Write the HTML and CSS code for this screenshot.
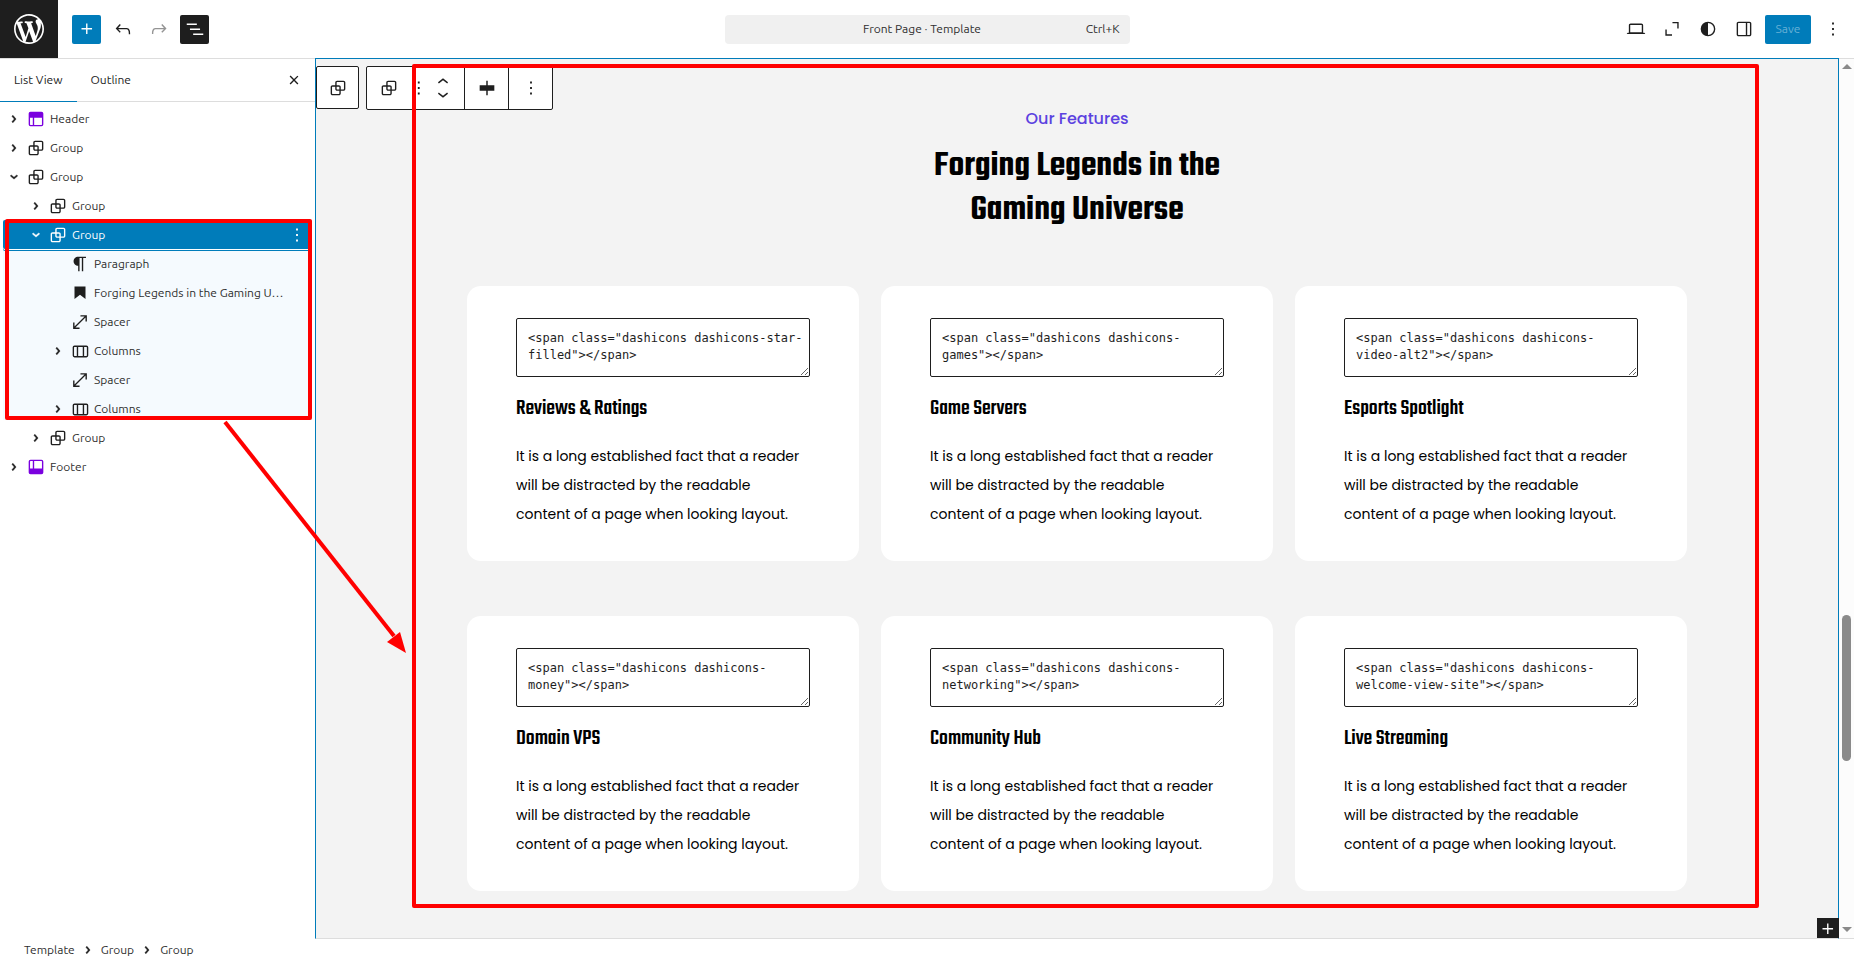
FILE: index.html
```html
<!DOCTYPE html>
<html lang="en">
<head>
<meta charset="utf-8">
<meta name="viewport" content="width=device-width, initial-scale=1">
<title>Front Page · Template</title>
<link rel="stylesheet" href="styles.css">
</head>
<body>
<svg class="sprite" aria-hidden="true">
  <symbol id="i-wp" viewBox="-2 -2 24 24"><path d="M20 10c0-5.51-4.49-10-10-10C4.48 0 0 4.49 0 10c0 5.52 4.48 10 10 10 5.51 0 10-4.48 10-10zM7.78 15.37L4.37 6.22c.55-.02 1.17-.08 1.17-.08.5-.06.44-1.13-.06-1.11 0 0-1.45.11-2.37.11-.18 0-.37 0-.58-.01C4.12 2.69 6.87 1.11 10 1.11c2.33 0 4.45.87 6.05 2.34-.68-.11-1.65.39-1.65 1.58 0 .74.45 1.36.9 2.1.35.61.55 1.36.55 2.46 0 1.49-1.4 5-1.4 5l-3.03-8.37c.54-.02.82-.17.82-.17.5-.05.44-1.25-.06-1.22 0 0-1.44.12-2.38.12-.87 0-2.33-.12-2.33-.12-.5-.03-.56 1.2-.06 1.22l.92.08 1.26 3.41zM17.41 10c.24-.64.74-1.87.43-4.25.7 1.29 1.05 2.71 1.05 4.25 0 3.29-1.73 6.24-4.4 7.78.97-2.59 1.94-5.2 2.92-7.78zM6.1 18.09C3.12 16.65 1.11 13.53 1.11 10c0-1.3.23-2.48.72-3.59C3.25 10.3 4.67 14.2 6.1 18.09zm4.03-6.63l2.58 6.98c-.86.29-1.76.45-2.71.45-.79 0-1.57-.11-2.29-.33.81-2.38 1.62-4.74 2.42-7.1z"/></symbol>
  <symbol id="i-plus" viewBox="0 0 24 24"><path d="M11 12.5V17.5H12.5V12.5H17.5V11H12.5V6H11V11H6V12.5H11Z"/></symbol>
  <symbol id="i-undo" viewBox="0 0 24 24"><path d="M18.3 11.7c-.6-.6-1.4-.9-2.3-.9H6.7l2.9-3.3-1.1-1-4.5 5L8.5 16l1-1-2.7-2.7H16c.5 0 .9.2 1.3.5 1 1 1 3.4 1 4.5v.3h1.5v-.2c0-1.5 0-4.3-1.5-5.7z"/></symbol>
  <symbol id="i-redo" viewBox="0 0 24 24"><path d="M15.6 6.5l-1.1 1 2.9 3.3H8c-.9 0-1.7.3-2.3.9-1.4 1.5-1.4 4.2-1.4 5.6v.2h1.5v-.3c0-1.1 0-3.5 1-4.5.3-.3.7-.5 1.3-.5h9.2L14.5 15l1.1 1.1 4.6-4.6-4.6-5z"/></symbol>
  <symbol id="i-list" viewBox="0 0 24 24"><path d="M3 6h11v1.5H3V6Zm3.5 5.5h11V13h-11v-1.5ZM21 17H10v1.5h11V17Z"/></symbol>
  <symbol id="i-close" viewBox="0 0 24 24"><path d="M12 13.06l3.712 3.713 1.061-1.06L13.061 12l3.712-3.712-1.06-1.06L12 10.938 8.288 7.227l-1.061 1.06L10.939 12l-3.712 3.712 1.06 1.061L12 13.061z"/></symbol>
  <symbol id="i-right" viewBox="0 0 24 24"><path d="M10.86 8.04L14.28 12.03L10.86 16.02L9.72 15.04L12.3 12.03L9.72 9.02L10.86 8.04Z" stroke="currentColor" stroke-width=".5"/></symbol>
  <symbol id="i-down" viewBox="0 0 24 24"><path d="M15.99 10.89L12 14.31L8.01 10.89L8.99 9.75L12 12.33L15.01 9.75L15.99 10.89Z" stroke="currentColor" stroke-width=".5"/></symbol>
  <symbol id="i-header" viewBox="0 0 24 24"><path fill-rule="evenodd" d="M18.5 10.5H10v8h8a.5.5 0 00.5-.5v-7.5zm-10 0h-3V18a.5.5 0 00.5.5h2.5v-8zM6 4h12a2 2 0 012 2v12a2 2 0 01-2 2H6a2 2 0 01-2-2V6a2 2 0 012-2z"/></symbol>
  <symbol id="i-footer" viewBox="0 0 24 24"><path fill-rule="evenodd" d="M18 5.5h-8v8h8.5V6a.5.5 0 00-.5-.5zm-9.5 8h-3V6a.5.5 0 01.5-.5h2.5v8zM6 4h12a2 2 0 012 2v12a2 2 0 01-2 2H6a2 2 0 01-2-2V6a2 2 0 012-2z"/></symbol>
  <symbol id="i-group" viewBox="0 0 24 24"><path d="M18 4h-7c-1.1 0-2 .9-2 2v3H6c-1.1 0-2 .9-2 2v7c0 1.1.9 2 2 2h7c1.1 0 2-.9 2-2v-3h3c1.1 0 2-.9 2-2V6c0-1.1-.9-2-2-2zm-4.5 14c0 .3-.2.5-.5.5H6c-.3 0-.5-.2-.5-.5v-7c0-.3.2-.5.5-.5h3V13c0 1.1.9 2 2 2h2.5v3zm0-4.5H11c-.3 0-.5-.2-.5-.5v-2.5H13c.3 0 .5.2.5.5v2.5zm5-.5c0 .3-.2.5-.5.5h-3V11c0-1.1-.9-2-2-2h-2.5V6c0-.3.2-.5.5-.5h7c.3 0 .5.2.5.5v7z"/></symbol>
  <symbol id="i-paragraph" viewBox="0 0 24 24"><path d="m9.996 14v-.225l.004 0v6.225h1.5v-14.5h2.5v14.5h1.5v-14.5h3v-1.5h-8.504c-2.761 0-5 2.239-5 5 0 2.761 2.239 5 5 5z"/></symbol>
  <symbol id="i-heading" viewBox="0 0 24 24"><path d="M6 5V18.59L12 13.85L18 18.59V5H6Z"/></symbol>
  <symbol id="i-spacer" viewBox="0 0 24 24"><path d="M7 18h4.5v1.5h-7v-7H6V17L17 6h-4.5V4.5h7v7H18V7L7 18Z"/></symbol>
  <symbol id="i-columns" viewBox="0 0 24 24"><path fill-rule="evenodd" d="M15 7.5h-5v10h5v-10Zm1.5 0v10H19a.5.5 0 0 0 .5-.5V8a.5.5 0 0 0-.5-.5h-2.5ZM6 7.5h2.5v10H6a.5.5 0 0 1-.5-.5V8a.5.5 0 0 1 .5-.5ZM6 6h13a2 2 0 0 1 2 2v9a2 2 0 0 1-2 2H6a2 2 0 0 1-2-2V8a2 2 0 0 1 2-2Z"/></symbol>
  <symbol id="i-more" viewBox="0 0 24 24"><path d="M13 19h-2v-2h2v2zm0-6h-2v-2h2v2zm0-6h-2V5h2v2z"/></symbol>
  <symbol id="i-laptop" viewBox="0 0 24 24"><path d="M20.5 16h-.7V8c0-1.1-.9-2-2-2H6.2c-1.1 0-2 .9-2 2v8h-.7c-.8 0-1.5.7-1.5 1.5h20c0-.8-.7-1.5-1.5-1.5zM5.7 8c0-.3.2-.5.5-.5h11.6c.3 0 .5.2.5.5v7.6H5.7V8z"/></symbol>
  <symbol id="i-expand" viewBox="0 0 24 24"><path d="M12.5 5H18.5V11.5M5.5 12.5V18.5H12" fill="none" stroke="currentColor" stroke-width="1.5"/></symbol>
  <symbol id="i-styles" viewBox="0 0 24 24"><path fill-rule="evenodd" d="M20 12a8 8 0 1 1-16 0 8 8 0 0 1 16 0Zm-1.5 0a6.5 6.5 0 0 1-6.5 6.5v-13a6.5 6.5 0 0 1 6.5 6.5Z"/></symbol>
  <symbol id="i-drawer" viewBox="0 0 24 24"><path fill-rule="evenodd" d="M18 4H6c-1.1 0-2 .9-2 2v12c0 1.1.9 2 2 2h12c1.1 0 2-.9 2-2V6c0-1.1-.9-2-2-2zm-4 14.5H6c-.3 0-.5-.2-.5-.5V6c0-.3.2-.5.5-.5h8v13zm4.5-.5c0 .3-.2.5-.5.5h-2.5v-13H18c.3 0 .5.2.5.5v12z"/></symbol>
  <symbol id="i-drag" viewBox="0 0 24 24"><path d="M8 7h2V5H8v2zm0 6h2v-2H8v2zm0 6h2v-2H8v2zm6-14v2h2V5h-2zm0 8h2v-2h-2v2zm0 6h2v-2h-2v2z"/></symbol>
  <symbol id="i-up-wide" viewBox="0 0 24 24"><path d="M6.5 12.4L12 8l5.5 4.4-.9 1.2L12 10l-4.5 3.6-1-1.2z"/></symbol>
  <symbol id="i-down-wide" viewBox="0 0 24 24"><path d="M17.5 11.6L12 16l-5.5-4.4.9-1.2L12 14l4.5-3.6 1 1.2z"/></symbol>
  <symbol id="i-align" viewBox="0 0 24 24"><path d="M4 9h7.2V4h1.6v5H20v6h-7.2v5h-1.6v-5H4z"/></symbol>
</svg>

<header class="topbar">
  <a class="logo" href="#" aria-label="Open navigation"><svg class="logo-mark"><use href="#i-wp"/></svg></a>
  <div class="tools">
    <button class="tool tool-primary" aria-label="Add block"><svg class="icon"><use href="#i-plus"/></svg></button>
    <button class="tool" aria-label="Undo"><svg class="icon"><use href="#i-undo"/></svg></button>
    <button class="tool tool-faded" aria-label="Redo"><svg class="icon"><use href="#i-redo"/></svg></button>
    <button class="tool tool-dark" aria-label="List view"><svg class="icon"><use href="#i-list"/></svg></button>
  </div>
  <button class="command"><span class="command-title">Front Page · Template</span><span class="command-key">Ctrl+K</span></button>
  <div class="actions">
    <button class="tool" aria-label="View"><svg class="icon"><use href="#i-laptop"/></svg></button>
    <button class="tool" aria-label="Zoom out"><svg class="icon"><use href="#i-expand"/></svg></button>
    <button class="tool" aria-label="Styles"><svg class="icon"><use href="#i-styles"/></svg></button>
    <button class="tool" aria-label="Settings"><svg class="icon"><use href="#i-drawer"/></svg></button>
    <button class="save">Save</button>
    <button class="tool" aria-label="Options"><svg class="icon"><use href="#i-more"/></svg></button>
  </div>
</header>

<main class="workspace">
  <aside class="sidebar">
    <div class="tabs">
      <button class="tab tab-active">List View</button>
      <button class="tab">Outline</button>
      <button class="tool tabs-close" aria-label="Close"><svg class="icon"><use href="#i-close"/></svg></button>
    </div>
    <ul class="tree">
      <li><div class="row template-part"><button class="toggle" aria-label="Expand"><svg class="icon"><use href="#i-right"/></svg></button><a class="block" href="#"><svg class="icon"><use href="#i-header"/></svg><span class="name">Header</span></a></div></li>
      <li><div class="row"><button class="toggle" aria-label="Expand"><svg class="icon"><use href="#i-right"/></svg></button><a class="block" href="#"><svg class="icon"><use href="#i-group"/></svg><span class="name">Group</span></a></div></li>
      <li><div class="row"><button class="toggle" aria-label="Collapse"><svg class="icon"><use href="#i-down"/></svg></button><a class="block" href="#"><svg class="icon"><use href="#i-group"/></svg><span class="name">Group</span></a></div>
        <ul class="level-2">
          <li><div class="row"><button class="toggle" aria-label="Expand"><svg class="icon"><use href="#i-right"/></svg></button><a class="block" href="#"><svg class="icon"><use href="#i-group"/></svg><span class="name">Group</span></a></div></li>
          <li class="branch"><div class="row row-selected"><button class="toggle" aria-label="Collapse"><svg class="icon"><use href="#i-down"/></svg></button><a class="block" href="#"><svg class="icon"><use href="#i-group"/></svg><span class="name">Group</span></a><button class="toggle" aria-label="Options"><svg class="icon"><use href="#i-more"/></svg></button></div>
            <ul class="level-3">
              <li><div class="row"><span class="toggle"></span><a class="block" href="#"><svg class="icon"><use href="#i-paragraph"/></svg><span class="name">Paragraph</span></a></div></li>
              <li><div class="row"><span class="toggle"></span><a class="block" href="#"><svg class="icon"><use href="#i-heading"/></svg><span class="name">Forging Legends in the Gaming U…</span></a></div></li>
              <li><div class="row"><span class="toggle"></span><a class="block" href="#"><svg class="icon"><use href="#i-spacer"/></svg><span class="name">Spacer</span></a></div></li>
              <li><div class="row"><button class="toggle" aria-label="Expand"><svg class="icon"><use href="#i-right"/></svg></button><a class="block" href="#"><svg class="icon"><use href="#i-columns"/></svg><span class="name">Columns</span></a></div></li>
              <li><div class="row"><span class="toggle"></span><a class="block" href="#"><svg class="icon"><use href="#i-spacer"/></svg><span class="name">Spacer</span></a></div></li>
              <li><div class="row"><button class="toggle" aria-label="Expand"><svg class="icon"><use href="#i-right"/></svg></button><a class="block" href="#"><svg class="icon"><use href="#i-columns"/></svg><span class="name">Columns</span></a></div></li>
            </ul>
            <div class="mark mark-branch"></div>
          </li>
          <li><div class="row"><button class="toggle" aria-label="Expand"><svg class="icon"><use href="#i-right"/></svg></button><a class="block" href="#"><svg class="icon"><use href="#i-group"/></svg><span class="name">Group</span></a></div></li>
        </ul>
      </li>
      <li><div class="row template-part"><button class="toggle" aria-label="Expand"><svg class="icon"><use href="#i-right"/></svg></button><a class="block" href="#"><svg class="icon"><use href="#i-footer"/></svg><span class="name">Footer</span></a></div></li>
    </ul>
  </aside>

  <section class="canvas">
    <div class="features">
      <p class="eyebrow">Our Features</p>
      <h2 class="title">Forging Legends in the<br>Gaming Universe</h2>
      <div class="cards">
        <article class="card"><textarea class="code" rows="2" aria-label="HTML">&lt;span class="dashicons dashicons-star-filled"&gt;&lt;/span&gt;</textarea><h3 class="card-title">Reviews &amp; Ratings</h3><p class="card-text">It is a long established fact that a reader<br>will be distracted by the readable<br>content of a page when looking layout.</p></article>
        <article class="card"><textarea class="code" rows="2" aria-label="HTML">&lt;span class="dashicons dashicons-games"&gt;&lt;/span&gt;</textarea><h3 class="card-title">Game Servers</h3><p class="card-text">It is a long established fact that a reader<br>will be distracted by the readable<br>content of a page when looking layout.</p></article>
        <article class="card"><textarea class="code" rows="2" aria-label="HTML">&lt;span class="dashicons dashicons-video-alt2"&gt;&lt;/span&gt;</textarea><h3 class="card-title">Esports Spotlight</h3><p class="card-text">It is a long established fact that a reader<br>will be distracted by the readable<br>content of a page when looking layout.</p></article>
        <article class="card"><textarea class="code" rows="2" aria-label="HTML">&lt;span class="dashicons dashicons-money"&gt;&lt;/span&gt;</textarea><h3 class="card-title">Domain VPS</h3><p class="card-text">It is a long established fact that a reader<br>will be distracted by the readable<br>content of a page when looking layout.</p></article>
        <article class="card"><textarea class="code" rows="2" aria-label="HTML">&lt;span class="dashicons dashicons-networking"&gt;&lt;/span&gt;</textarea><h3 class="card-title">Community Hub</h3><p class="card-text">It is a long established fact that a reader<br>will be distracted by the readable<br>content of a page when looking layout.</p></article>
        <article class="card"><textarea class="code" rows="2" aria-label="HTML">&lt;span class="dashicons dashicons-welcome-view-site"&gt;&lt;/span&gt;</textarea><h3 class="card-title">Live Streaming</h3><p class="card-text">It is a long established fact that a reader<br>will be distracted by the readable<br>content of a page when looking layout.</p></article>
      </div>
    </div>
    <div class="block-tools">
      <div class="block-bar block-bar-parent"><button class="cell" aria-label="Select parent block"><svg class="icon"><use href="#i-group"/></svg></button></div>
      <div class="block-bar">
        <div class="segment segment-main">
          <button class="cell" aria-label="Group"><svg class="icon"><use href="#i-group"/></svg></button>
          <button class="grip" aria-label="Drag"><svg class="icon"><use href="#i-drag"/></svg></button>
          <div class="movers"><button class="mover" aria-label="Move up"><svg class="icon"><use href="#i-up-wide"/></svg></button><button class="mover" aria-label="Move down"><svg class="icon"><use href="#i-down-wide"/></svg></button></div>
        </div>
        <div class="segment"><button class="cell" aria-label="Align"><svg class="icon"><use href="#i-align"/></svg></button></div>
        <div class="segment"><button class="cell" aria-label="Options"><svg class="icon"><use href="#i-more"/></svg></button></div>
      </div>
    </div>
    <div class="mark mark-section"></div>
    <button class="append" aria-label="Add block"><svg class="icon"><use href="#i-plus"/></svg></button>
  </section>
  <div class="scrollbar" aria-hidden="true">
    <svg class="arrow" viewBox="0 0 10 6"><path d="M0 5L5 0L10 5Z"/></svg>
    <div class="track"><div class="thumb"></div></div>
    <svg class="arrow" viewBox="0 0 10 6"><path d="M0 0H10L5 5Z"/></svg>
  </div>
  <svg class="pointer" viewBox="0 0 184 236" aria-hidden="true"><path d="M2 2L171 216" fill="none" stroke="#f00" stroke-width="4"/><path d="M164 222L177 212L183 233Z" fill="#f00"/></svg>
</main>

<nav class="breadcrumb" aria-label="Block breadcrumb">
  <a class="crumb" href="#">Template</a><svg class="icon"><use href="#i-right"/></svg><a class="crumb" href="#">Group</a><svg class="icon"><use href="#i-right"/></svg><a class="crumb" href="#">Group</a>
</nav>
</body>
</html>
```
FILE: styles.css
```css
* { box-sizing: border-box; }

body {
  margin: 0;
  height: 100vh;
  display: flex;
  flex-direction: column;
  background: #fff;
  color: #1e1e1e;
  font: 12px/16px Ubuntu, "Noto Sans", sans-serif;
  overflow: hidden;
}

button {
  margin: 0;
  padding: 0;
  border: 0;
  background: none;
  color: inherit;
  font: inherit;
  cursor: pointer;
}

a { color: inherit; text-decoration: none; }
ul { margin: 0; padding: 0; list-style: none; }
.sprite { position: absolute; width: 0; height: 0; }
.icon { display: block; width: 22px; height: 22px; fill: currentColor; flex: none; }

/* Top bar */
.topbar {
  display: grid;
  grid-template-columns: 1fr 405px 1fr;
  align-items: center;
  height: 59px;
  flex: none;
  border-bottom: 1px solid #ddd;
  position: relative;
  padding: 0 7px;
}
.logo {
  position: absolute;
  left: 0;
  top: 0;
  display: grid;
  place-items: center;
  width: 58px;
  height: 58px;
  background: #1e1e1e;
  color: #fff;
}
.logo-mark { width: 36px; height: 36px; fill: currentColor; }
.tools, .actions { display: flex; align-items: center; gap: 7px; }
.tools { padding-left: 65px; }
.actions { justify-content: flex-end; }
.tool {
  display: grid;
  place-items: center;
  width: 29px;
  height: 29px;
  border-radius: 2px;
}
.tool-primary { background: #007cba; color: #fff; }
.tool-dark { background: #1e1e1e; color: #fff; }
.tool-faded { color: #949494; }
.command {
  display: grid;
  grid-template-columns: 1fr auto 1fr;
  align-items: center;
  height: 29px;
  padding: 0 10px 0 0;
  border-radius: 4px;
  background: #f0f0f0;
  color: #2f2f2f;
}
.command-title { grid-column: 2; }
.command-key { text-align: right; }
.save {
  width: 46px;
  height: 29px;
  border-radius: 2px;
  background: #007cba;
  color: #66b0d6;
}

/* Workspace */
.workspace { display: flex; flex: 1; min-height: 0; position: relative; }
.sidebar { width: 315px; flex: none; }
.tabs { display: flex; align-items: center; height: 43px; border-bottom: 1px solid #ddd; padding-right: 7px; }
.tab { align-self: stretch; padding: 0 14px; }
.tab-active { border-bottom: 1px solid #007cba; margin-bottom: -1px; }
.tabs-close { margin-left: auto; }

.tree { padding: 2px 3px; }
.row { display: flex; align-items: center; height: 29px; padding-right: 4px; color: #1e1e1e; }
.block { display: flex; align-items: center; gap: 3px; flex: 1; min-width: 0; }
.toggle { display: grid; place-items: center; width: 22px; height: 22px; flex: none; }
.name { white-space: nowrap; color: #2f2f2f; }
.template-part .block .icon { color: #7a00df; }
.level-2 .row { padding-left: 22px; }
.level-3 .row { padding-left: 44px; }
.branch { position: relative; background: linear-gradient(#f5fafe, #f5fafe) no-repeat 0 0 / 100% 200px; }
.row-selected {
  background: #007cba;
  color: #fff;
  border-radius: 2px;
  box-shadow: 0 1px 0 #fff, 0 2px 0 #007cba;
}
.row-selected .name { color: #fff; }

/* Canvas */
.canvas {
  position: relative;
  flex: 1;
  min-width: 0;
  margin-top: -1px;
  border: 1px solid #007cba;
  border-bottom-color: #ddd;
  background: #f3f3f3;
}
.features {
  max-width: 1220px;
  margin: 0 auto;
  padding-top: 47px;
  color: #000;
  font-family: Poppins, Inter, sans-serif;
}
.eyebrow { margin: 0; text-align: center; font-size: 16px; line-height: 26px; font-weight: 500; color: #5b42e0; }
.title { margin: 13px 0 53px; text-align: center; font: 600 36px/44px Teko, "Liberation Sans Narrow", "Liberation Sans", sans-serif; }
.cards { display: grid; grid-template-columns: repeat(3, minmax(0, 1fr)); column-gap: 22px; row-gap: 55px; }
.card { padding: 32px 49px; border-radius: 14px; background: #fff; }
.code {
  display: block;
  width: 100%;
  height: 59px;
  padding: 11px 4px 8px 11px;
  border: 1px solid #1e1e1e;
  border-radius: 2px;
  background: #fff;
  color: #1e1e1e;
  font: 12px/17px "DejaVu Sans Mono", monospace;
  resize: vertical;
  overflow: hidden;
}
.card-title { margin: 18px 0 19px; font: 500 22px/28px Teko, "Liberation Sans Narrow", "Liberation Sans", sans-serif; }
.card-text { margin: 0; font-size: 14px; line-height: 29px; white-space: nowrap; }

/* Floating block toolbar */
.block-tools { position: absolute; left: 0; top: 7px; display: flex; align-items: flex-start; gap: 7px; }
.block-bar { display: flex; height: 44px; border: 1px solid #1e1e1e; border-radius: 2px; background: #fff; }
.block-bar-parent { width: 43px; height: 43px; }
.segment { display: flex; align-items: center; border-left: 1px solid #1e1e1e; }
.segment:first-child { border-left: 0; }
.cell { display: grid; place-items: center; width: 43px; height: 42px; }
.block-bar-parent .cell { width: 41px; height: 41px; }
.grip { width: 12px; height: 42px; display: grid; place-items: center; }
.grip .icon { margin: 0 -5px; }
.movers { display: grid; }
.mover { width: 42px; height: 12px; display: grid; place-items: center; }
.mover .icon { margin: -5px 0; }

.append {
  position: absolute;
  right: -1px;
  bottom: 0;
  display: grid;
  place-items: center;
  width: 22px;
  height: 20px;
  background: #1e1e1e;
  color: #fff;
}

/* Highlight frames */
.mark { position: absolute; border: 4px solid #f00; border-radius: 2px; pointer-events: none; }
.mark-branch { inset: -1px 0 3px 2px; }
.mark-section { inset: 5px 79px 30px 96px; }
.pointer { position: absolute; left: 223px; top: 361px; width: 184px; height: 236px; pointer-events: none; }

/* Scrollbar */
.scrollbar { display: flex; flex-direction: column; align-items: center; justify-content: space-between; width: 15px; padding: 5px 0; background: #fcfcfc; border-bottom: 1px solid #ddd; }
.arrow { width: 10px; height: 6px; fill: #8a8a8a; }
.track { display: flex; flex-direction: column; justify-content: flex-end; flex: 1; padding-bottom: 166px; }
.thumb { width: 9px; height: 146px; border-radius: 5px; background: #8a8a8a; }

/* Breadcrumb */
.breadcrumb { display: flex; align-items: center; height: 22px; padding-left: 24px; gap: 2px; flex: none; }
.crumb { color: #2f2f2f; }
```
